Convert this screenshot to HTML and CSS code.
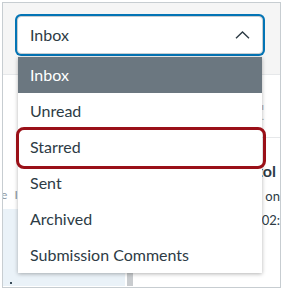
FILE: index.html
```html
<!DOCTYPE html>
<html>

<head>
    <meta charset="UTF-8">
    <title>Inbox</title>
    <link rel="stylesheet" href="styles.css">
</head>

<body>
    <div class="frame">
        <div class="toolbar">
            <div class="select">
                <span>Inbox</span>
                <svg class="caret" width="15" height="8" viewBox="0 0 15 8">
                    <path d="M1 7.2 L7.5 1 L14 7.2" fill="none" stroke="#2d3b45" stroke-width="1.4"/>
                </svg>
            </div>
        </div>
        <div class="panes">
            <div class="list">
                <div class="search">e I</div>
                <div class="conv">
                    <span class="dot"></span>
                </div>
            </div>
            <div class="scroll"></div>
            <div class="detail">
                <div class="marks">ı<br>.</div>
                <div class="subject">Capitol</div>
                <div class="meta">Question on</div>
                <div class="meta date">Jan 12, 2023 02:</div>
            </div>
        </div>
        <!-- dropdown open over the inbox -->
        <ul class="menu">
            <li class="active">Inbox</li>
            <li>Unread</li>
            <li class="starred">Starred<span class="callout"></span></li>
            <li>Sent</li>
            <li>Archived</li>
            <li>Submission Comments</li>
        </ul>
    </div>
</body>

</html>
```

FILE: styles.css
```css
body {
    margin: 0;
    background-color: #FFF;
    font-family: Lato, "Noto Sans", sans-serif;
    color: #2D3B45;
}

.frame {
    position: relative;
    margin: 2px 0 0 2px;
    width: 277px;
    height: 284px;
    border: 1px solid #C7CDD1;
    overflow: hidden;
    background-color: #FFF;
}

.toolbar {
    height: 72px;
    background-color: #F5F5F5;
    border-bottom: 1px solid #E6E8EA;
    padding: 13px 0 0 14px;
    box-sizing: border-box;
}

.select {
    display: flex;
    align-items: center;
    justify-content: space-between;
    width: 246px;
    height: 38px;
    box-sizing: border-box;
    padding: 0 12px 1px 12px;
    border: 1px solid #C7CDD1;
    border-radius: 4px;
    background-color: #FFF;
    box-shadow: 0 0 0 2px #0374B5;
    font-size: 16px;
}

.caret {
    display: block;
}

.panes {
    display: flex;
    height: 211px;
}

.list {
    width: 122px;
    display: flex;
    flex-direction: column;
}

.search {
    margin-top: 112px;
    height: 22px;
    font-size: 12px;
    color: #8B969E;
    white-space: nowrap;
    text-indent: -2px;
    word-spacing: 4px;
}

.conv {
    flex: 1;
    background-color: #EAF2F8;
    position: relative;
}

.dot {
    position: absolute;
    left: 7px;
    bottom: 2px;
    width: 2px;
    height: 2px;
    background-color: #394B58;
}

.scroll {
    width: 6px;
    height: 15px;
    margin: 196px 0 0 2px;
    background-color: #C9CCCF;
}

.detail {
    flex: 1;
    padding-top: 26px;
    text-align: right;
    white-space: nowrap;
    overflow: hidden;
}

.marks {
    height: 37px;
    font-size: 10px;
    line-height: 10px;
    color: #9AA4AB;
    padding-right: 16px;
    border-bottom: 1px solid #E6E8EA;
    box-sizing: border-box;
}

.subject {
    margin-top: 23px;
    font-size: 16px;
    font-weight: bold;
    padding-right: 4px;
}

.meta {
    margin-top: 8px;
    font-size: 13px;
}

.meta.date {
    margin-right: 0;
}

.menu {
    position: absolute;
    left: 15px;
    top: 54px;
    width: 244px;
    margin: 0;
    padding: 0;
    list-style: none;
    background-color: #FFF;
    box-shadow: 0 1px 4px rgba(0, 0, 0, 0.3);
    font-size: 16px;
}

.menu li {
    position: relative;
    height: 36px;
    line-height: 36px;
    padding-left: 12px;
}

.menu li.active {
    background-color: #6B7780;
    color: #FFF;
}

.callout {
    position: absolute;
    left: -2px;
    right: -4px;
    top: -2px;
    bottom: -4px;
    border: 3px solid #9A1018;
    border-radius: 8px;
}
```
